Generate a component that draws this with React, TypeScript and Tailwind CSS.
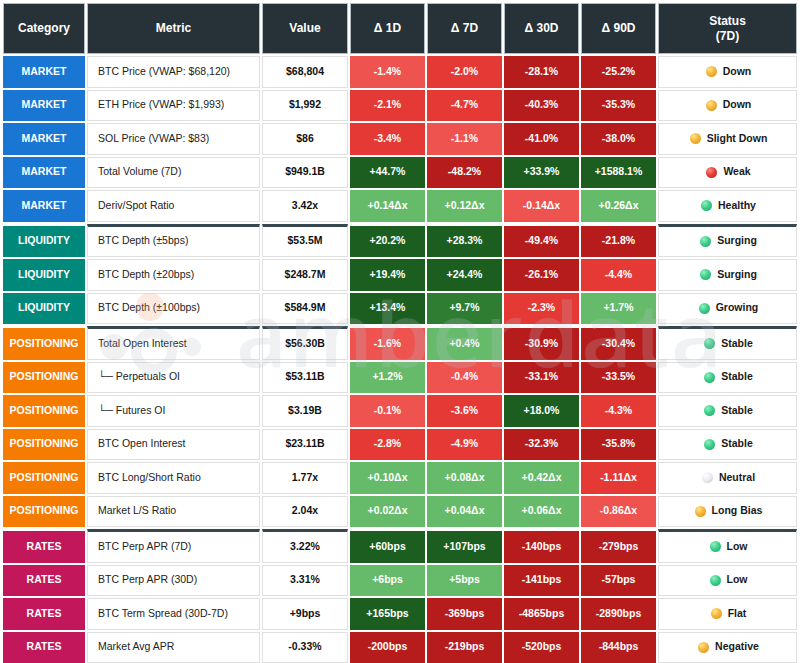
import React from 'react';

// Barvy buniek pre zmeny (Δ)
const deltaBg: Record<string, string> = {
  lr: 'bg-[#ef5350]',
  r: 'bg-[#e53935]',
  dr: 'bg-[#b71c1c]',
  dg: 'bg-[#1b5e20]',
  g: 'bg-[#2e7d32]',
  lg: 'bg-[#66bb6a]',
};

const catBg: Record<string, string> = {
  MARKET: 'bg-[#1976d2]',
  LIQUIDITY: 'bg-[#00897b]',
  POSITIONING: 'bg-[#f57c00]',
  RATES: 'bg-[#c2185b]',
};

// Guličky statusu (emoji-like)
const dotBg: Record<string, string> = {
  yellow: 'bg-[radial-gradient(circle_at_35%_30%,#ffe48a_0%,#f3b63a_45%,#d98c14_100%)]',
  green: 'bg-[radial-gradient(circle_at_35%_30%,#8ff0c0_0%,#3fcf8a_45%,#1e9e68_100%)]',
  red: 'bg-[radial-gradient(circle_at_35%_30%,#ff8a80_0%,#e53935_50%,#b71c1c_100%)]',
  white: 'bg-[radial-gradient(circle_at_35%_30%,#ffffff_0%,#eeeaf2_50%,#c9bfd2_100%)]',
};

type Row = {
  cat: string;
  metric: string;
  value: string;
  deltas: [string, string][];
  status: string;
  dot: string;
  first?: boolean;
};

const rows: Row[] = [
  { cat: 'MARKET', metric: 'BTC Price (VWAP: $68,120)', value: '$68,804', deltas: [['-1.4%', 'lr'], ['-2.0%', 'r'], ['-28.1%', 'dr'], ['-25.2%', 'dr']], status: 'Down', dot: 'yellow' },
  { cat: 'MARKET', metric: 'ETH Price (VWAP: $1,993)', value: '$1,992', deltas: [['-2.1%', 'r'], ['-4.7%', 'r'], ['-40.3%', 'dr'], ['-35.3%', 'dr']], status: 'Down', dot: 'yellow' },
  { cat: 'MARKET', metric: 'SOL Price (VWAP: $83)', value: '$86', deltas: [['-3.4%', 'r'], ['-1.1%', 'lr'], ['-41.0%', 'dr'], ['-38.0%', 'dr']], status: 'Slight Down', dot: 'yellow' },
  { cat: 'MARKET', metric: 'Total Volume (7D)', value: '$949.1B', deltas: [['+44.7%', 'dg'], ['-48.2%', 'dr'], ['+33.9%', 'dg'], ['+1588.1%', 'dg']], status: 'Weak', dot: 'red' },
  { cat: 'MARKET', metric: 'Deriv/Spot Ratio', value: '3.42x', deltas: [['+0.14Δx', 'lg'], ['+0.12Δx', 'lg'], ['-0.14Δx', 'lr'], ['+0.26Δx', 'lg']], status: 'Healthy', dot: 'green' },
  { cat: 'LIQUIDITY', metric: 'BTC Depth (±5bps)', value: '$53.5M', deltas: [['+20.2%', 'dg'], ['+28.3%', 'dg'], ['-49.4%', 'dr'], ['-21.8%', 'dr']], status: 'Surging', dot: 'green', first: true },
  { cat: 'LIQUIDITY', metric: 'BTC Depth (±20bps)', value: '$248.7M', deltas: [['+19.4%', 'dg'], ['+24.4%', 'dg'], ['-26.1%', 'dr'], ['-4.4%', 'r']], status: 'Surging', dot: 'green' },
  { cat: 'LIQUIDITY', metric: 'BTC Depth (±100bps)', value: '$584.9M', deltas: [['+13.4%', 'dg'], ['+9.7%', 'g'], ['-2.3%', 'r'], ['+1.7%', 'lg']], status: 'Growing', dot: 'green' },
  { cat: 'POSITIONING', metric: 'Total Open Interest', value: '$56.30B', deltas: [['-1.6%', 'lr'], ['+0.4%', 'lg'], ['-30.9%', 'dr'], ['-30.4%', 'dr']], status: 'Stable', dot: 'green', first: true },
  { cat: 'POSITIONING', metric: '└─ Perpetuals OI', value: '$53.11B', deltas: [['+1.2%', 'lg'], ['-0.4%', 'lr'], ['-33.1%', 'dr'], ['-33.5%', 'dr']], status: 'Stable', dot: 'green' },
  { cat: 'POSITIONING', metric: '└─ Futures OI', value: '$3.19B', deltas: [['-0.1%', 'lr'], ['-3.6%', 'r'], ['+18.0%', 'dg'], ['-4.3%', 'r']], status: 'Stable', dot: 'green' },
  { cat: 'POSITIONING', metric: 'BTC Open Interest', value: '$23.11B', deltas: [['-2.8%', 'r'], ['-4.9%', 'r'], ['-32.3%', 'dr'], ['-35.8%', 'dr']], status: 'Stable', dot: 'green' },
  { cat: 'POSITIONING', metric: 'BTC Long/Short Ratio', value: '1.77x', deltas: [['+0.10Δx', 'lg'], ['+0.08Δx', 'lg'], ['+0.42Δx', 'lg'], ['-1.11Δx', 'r']], status: 'Neutral', dot: 'white' },
  { cat: 'POSITIONING', metric: 'Market L/S Ratio', value: '2.04x', deltas: [['+0.02Δx', 'lg'], ['+0.04Δx', 'lg'], ['+0.06Δx', 'lg'], ['-0.86Δx', 'lr']], status: 'Long Bias', dot: 'yellow' },
  { cat: 'RATES', metric: 'BTC Perp APR (7D)', value: '3.22%', deltas: [['+60bps', 'dg'], ['+107bps', 'dg'], ['-140bps', 'dr'], ['-279bps', 'dr']], status: 'Low', dot: 'green', first: true },
  { cat: 'RATES', metric: 'BTC Perp APR (30D)', value: '3.31%', deltas: [['+6bps', 'lg'], ['+5bps', 'lg'], ['-141bps', 'dr'], ['-57bps', 'dr']], status: 'Low', dot: 'green' },
  { cat: 'RATES', metric: 'BTC Term Spread (30D-7D)', value: '+9bps', deltas: [['+165bps', 'dg'], ['-369bps', 'dr'], ['-4865bps', 'dr'], ['-2890bps', 'dr']], status: 'Flat', dot: 'yellow' },
  { cat: 'RATES', metric: 'Market Avg APR', value: '-0.33%', deltas: [['-200bps', 'dr'], ['-219bps', 'dr'], ['-520bps', 'dr'], ['-844bps', 'dr']], status: 'Negative', dot: 'yellow' },
];

const cols = 'grid grid-cols-[82px_173px_86px_75px_75px_75px_75px_139px] gap-[2px]';

// Hlavička tabuľky
function Header() {
  const th = 'bg-[#263238] border border-[#b0bec5] text-white font-bold text-[12px] leading-[15px] flex items-center justify-center text-center';
  return (
    <div className={`${cols} h-[51px]`}>
      <div className={th}>Category</div>
      <div className={th}>Metric</div>
      <div className={th}>Value</div>
      <div className={th}>Δ 1D</div>
      <div className={th}>Δ 7D</div>
      <div className={th}>Δ 30D</div>
      <div className={th}>Δ 90D</div>
      <div className={th}>Status<br />(7D)</div>
    </div>
  );
}

function TableRow({ row }: { row: Row }) {
  // prvý riadok sekcie má tmavý oddeľovač nad bielymi bunkami
  const white = row.first
    ? 'bg-white border border-[#e0e0e0] border-t-[3px] border-t-[#37474f]'
    : 'bg-white border border-[#e0e0e0]';
  const colored = row.first ? 'border-t-[2px] border-t-white' : '';
  return (
    <div className={`${cols} ${row.first ? 'h-[33.5px]' : 'h-[31.5px]'}`}>
      <div className={`${catBg[row.cat]} ${colored} flex items-center justify-center text-white font-bold text-[10.5px]`}>
        {row.cat}
      </div>
      <div className={`${white} flex items-center pl-[10px] text-[10.5px] text-[#222]`}>
        {row.metric}
      </div>
      <div className={`${white} flex items-center justify-center font-bold text-[10.5px] text-[#111]`}>
        {row.value}
      </div>
      {row.deltas.map(([txt, c], i) => (
        <div key={i} className={`${deltaBg[c]} ${colored} flex items-center justify-center text-white font-bold text-[10.5px]`}>
          {txt}
        </div>
      ))}
      <div className={`${white} flex items-center justify-center pl-[2px]`}>
        <span className={`${dotBg[row.dot]} w-[11px] h-[11px] rounded-full shrink-0`} />
        <span className="ml-[6px] font-bold text-[10.5px] text-[#1a1a1a]">{row.status}</span>
      </div>
    </div>
  );
}

export default function App() {
  return (
    <div className="relative w-[800px] h-[663px] overflow-hidden bg-white font-['Liberation_Sans',Arial,sans-serif]">
      <div className="flex flex-col gap-[2px] pt-[3px] pl-[3px]">
        <Header />
        {rows.map((r, i) => (
          <TableRow key={i} row={r} />
        ))}
      </div>

      {/* Watermark amberdata */}
      <div className="pointer-events-none absolute left-[92px] top-[285px] flex items-center opacity-[0.22]">
        <svg width="120" height="95" viewBox="0 0 120 95" className="shrink-0">
          <circle cx="58" cy="22" r="14" fill="#f6a57a" />
          <circle cx="22" cy="62" r="13" fill="#b9c1cc" />
          <circle cx="62" cy="66" r="18" fill="none" stroke="#b9c1cc" strokeWidth="10" />
          <circle cx="100" cy="62" r="9" fill="#b9c1cc" />
        </svg>
        <span className="ml-[24px] font-['Open_Sans'] font-semibold text-[88px] leading-none tracking-[2px] text-[#b9c1cc]">
          amberdata
        </span>
      </div>
    </div>
  );
}
